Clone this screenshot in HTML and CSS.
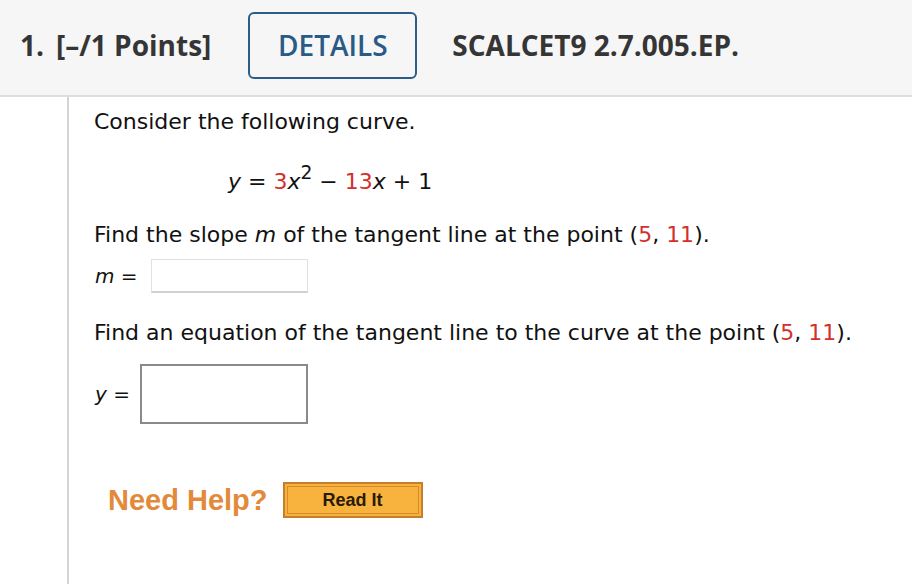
FILE: index.html
```html
<!DOCTYPE html>
<html>
<head>
<meta charset="utf-8">
<link rel="stylesheet" href="styles.css">
</head>
<body>
<header class="qhead">
  <span class="qnum">1.</span>
  <span class="qpts">[–/1 Points]</span>
  <span class="details">DETAILS</span>
  <span class="qid">SCALCET9 2.7.005.EP.</span>
</header>
<div class="qbody">
  <div class="gutter"></div>
  <main class="content">
    <p class="line intro">Consider the following curve.</p>
    <p class="eq"><i>y</i> = <span class="red">3</span><i>x</i><sup>2</sup> − <span class="red">13</span><i>x</i> + 1</p>
    <p class="line q1">Find the slope <i>m</i> of the tangent line at the point (<span class="red">5</span>, <span class="red">11</span>).</p>
    <div class="ans ans1"><span class="lbl"><i>m</i> =</span><span class="box small"></span></div>
    <p class="line q2">Find an equation of the tangent line to the curve at the point (<span class="red">5</span>, <span class="red">11</span>).</p>
    <div class="ans ans2"><span class="lbl"><i>y</i> =</span><span class="box big"></span></div>
    <div class="help"><span class="needhelp">Need Help?</span><span class="readit"><span class="readit-in">Read It</span></span></div>
  </main>
</div>
</body>
</html>
```
FILE: styles.css
```css
html, body {
  margin: 0;
  padding: 0;
  background: #fff;
}
body {
  width: 912px;
  height: 584px;
  overflow: hidden;
}
.qhead {
  height: 97px;
  background: #f6f6f6;
  border-bottom: 2px solid #dedede;
  box-sizing: border-box;
  display: flex;
  align-items: center;
  padding-left: 20px;
  padding-bottom: 5px;
  font-family: "Open Sans", sans-serif;
  font-weight: 700;
  font-size: 28px;
  color: #353535;
}
.qpts {
  margin-left: 12px;
}
.details {
  margin-left: 37px;
  width: 169px;
  height: 67px;
  box-sizing: border-box;
  border: 2.5px solid #2b5d88;
  border-radius: 6px;
  display: flex;
  align-items: center;
  justify-content: center;
  color: #2a5a86;
  font-weight: 600;
}
.qid {
  margin-left: 35px;
}
.qbody {
  display: flex;
  height: 487px;
}
.gutter {
  width: 67px;
  border-right: 2px solid #d4d4d4;
  flex: none;
}
.content {
  padding-left: 25px;
  font-family: "DejaVu Sans", Verdana, sans-serif;
  font-size: 22px;
  line-height: 26px;
  color: #111;
}
.content p {
  margin: 0;
}
.red {
  color: #d3302c;
}
.content .intro {
  margin-top: 12px;
}
.content .eq {
  margin-top: 34px;
  padding-left: 134px;
}
.eq sup {
  font-size: 0.85em;
  line-height: 0;
  vertical-align: 0.55em;
}
.content .q1 {
  margin-top: 27px;
}
.ans {
  display: flex;
  align-items: center;
  padding-left: 1px;
}
.lbl {
  font-size: 20px;
}
.ans1 {
  margin-top: 11px;
}
.box {
  display: block;
  box-sizing: border-box;
  background: #fff;
}
.box.small {
  margin-left: 13px;
  width: 157px;
  height: 34px;
  border: 1px solid #e1e1e1;
  border-bottom: 2px solid #d0d0d0;
}
.content .q2 {
  margin-top: 27px;
}
.ans2 {
  margin-top: 18px;
}
.box.big {
  margin-left: 10px;
  width: 168px;
  height: 60px;
  border: 2px solid #8a8a8a;
}
.help {
  display: flex;
  align-items: center;
  margin-top: 58px;
  padding-left: 14px;
  font-family: "Liberation Sans", Arial, sans-serif;
  font-weight: 700;
}
.needhelp {
  color: #e28a3a;
  font-size: 29px;
}
.readit {
  margin-left: 15px;
  width: 140px;
  height: 36px;
  box-sizing: border-box;
  border: 2px solid #c57e2c;
  background: #f8b23e;
  padding: 2px;
  display: flex;
}
.readit-in {
  flex: 1;
  border: 1px solid #d58a2e;
  display: flex;
  align-items: center;
  justify-content: center;
  font-size: 18px;
  color: #2a1a08;
}
```
